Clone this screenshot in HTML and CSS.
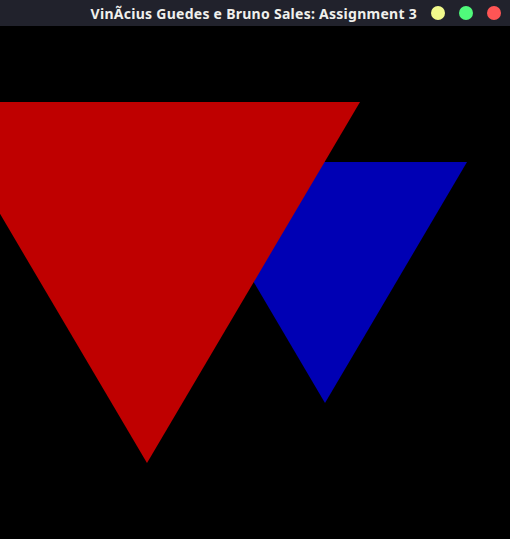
FILE: index.html
```html
<!DOCTYPE html>
<html>
<head>
<meta charset="utf-8">
<link rel="stylesheet" href="styles.css">
</head>
<body>
<div class="titlebar">
  <span class="title">VinÃcius Guedes e Bruno Sales: Assignment 3</span>
  <div class="buttons">
    <span class="dot yellow"></span>
    <span class="dot green"></span>
    <span class="dot red"></span>
  </div>
</div>
<svg class="canvas" width="510" height="513" viewBox="0 26 510 513">
  <polygon points="183,162 467,162 325,403" fill="#0000b4"/>
  <polygon points="-66,102 360,102 147,463" fill="#bf0000"/>
</svg>
</body>
</html>
```
FILE: styles.css
```css
html, body {
  margin: 0;
  padding: 0;
  background: #000;
  width: 510px;
  height: 539px;
  overflow: hidden;
}
.titlebar {
  height: 26px;
  background: #21222c;
  display: flex;
  align-items: center;
  justify-content: flex-end;
  padding-right: 9px;
  box-sizing: border-box;
}
.title {
  font-family: "Noto Sans", "DejaVu Sans", sans-serif;
  font-weight: bold;
  font-size: 14px;
  letter-spacing: 0.27px;
  color: #f0f0ec;
  margin-right: 14px;
}
.buttons {
  display: flex;
  gap: 14px;
}
.dot {
  width: 14px;
  height: 14px;
  border-radius: 50%;
  display: block;
}
.yellow { background: #f1fa8c; }
.green { background: #50fa7b; }
.red { background: #ff5555; }
.canvas {
  display: block;
}
```
